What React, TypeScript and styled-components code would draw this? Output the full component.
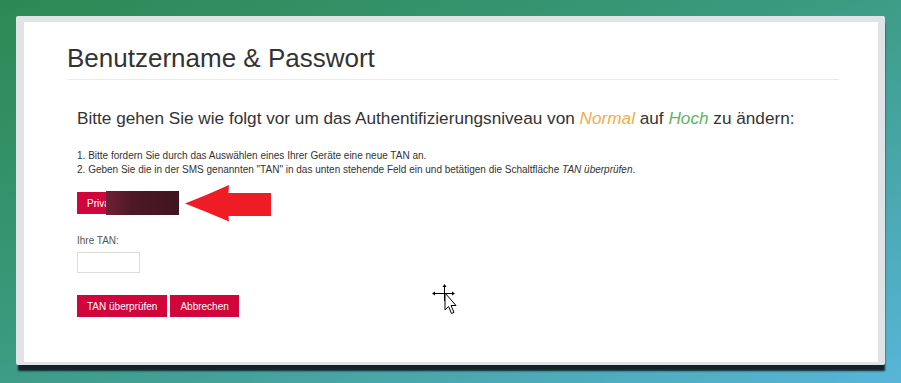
import React from 'react'
import styled, { createGlobalStyle } from 'styled-components'

const GlobalStyle = createGlobalStyle`
    html, body {
        margin: 0;
        padding: 0;
    }
    body {
        font-family: 'Liberation Sans', Arial, sans-serif;
        color: #333;
    }
`

const App: React.FC = () => {
    return (
        <Page>
            <GlobalStyle />
            <Window>
                <Sheet>
                    <Title>Benutzername &amp; Passwort</Title>
                    <Body>
                        <Lead>
                            Bitte gehen Sie wie folgt vor um das Authentifizierungsniveau von{' '}
                            <Level color="#f0ad4e">Normal</Level> auf <Level color="#5cb85c">Hoch</Level> zu ändern:
                        </Lead>
                        <Steps>
                            <li>Bitte fordern Sie durch das Auswählen eines Ihrer Geräte eine neue TAN an.</li>
                            <li>
                                Geben Sie die in der SMS genannten "TAN" in das unten stehende Feld ein und betätigen die
                                Schaltfläche <em>TAN überprüfen</em>.
                            </li>
                        </Steps>
                        <DeviceRow>
                            <DeviceButton>
                                Priva
                                <Redacted />
                            </DeviceButton>
                            <Arrow width="86" height="38" viewBox="0 0 86 38">
                                <path d="M0 19.5 Q22 11 44 1 L43.5 9 L86 9 L86 32 L43.5 32 L44 37.5 Q22 28 0 19.5 Z" fill="#ee1d25" />
                            </Arrow>
                        </DeviceRow>
                        <Label>Ihre TAN:</Label>
                        <TanInput type="text" />
                        <Actions>
                            <RedButton>TAN überprüfen</RedButton>
                            <RedButton>Abbrechen</RedButton>
                        </Actions>
                    </Body>
                    <Cursor width="26" height="34" viewBox="0 0 26 34">
                        <g stroke="#000" strokeWidth="1" fill="none">
                            <path d="M12.5 2 V17" />
                            <path d="M2 9.5 H21" />
                        </g>
                        <path d="M12.5 0 L10.5 3 H14.5 Z M0 9.5 L3 7.5 V11.5 Z M23 9.5 L20 7.5 V11.5 Z" fill="#000" />
                        <path d="M13 9 L13 26 L16.5 22.5 L19.5 29.5 L22 28.4 L19 21.5 L24 21.5 Z" fill="#fff" stroke="#000" strokeWidth="1" strokeLinejoin="round" />
                    </Cursor>
                </Sheet>
            </Window>
        </Page>
    )
}

const Page = styled.div`
    width: 901px;
    height: 383px;
    box-sizing: border-box;
    padding: 16px 0 0 16px;
    overflow: hidden;
    background: linear-gradient(to bottom right, #2d8953 0%, #3a9a7e 45%, #57b5d9 100%);
`

const Window = styled.div`
    width: 869px;
    height: 349px;
    box-sizing: border-box;
    border-style: solid;
    border-color: #e1e4e7;
    border-width: 6px 7px 3px 8px;
    border-radius: 2px;
    background: #fff;
    box-shadow: 1px 7px 2px -1px #13232a;
`

const Sheet = styled.div`
    position: relative;
    height: 100%;
    padding: 0 39px 0 43px;
    background: #fff;
`

const Title = styled.h1`
    margin: 0;
    padding: 22px 0 6px;
    font-size: 26px;
    line-height: 29px;
    font-weight: 400;
    color: #333;
    border-bottom: 1px solid #ebebeb;
`

const Body = styled.div`
    padding-left: 10px;
    display: flex;
    flex-direction: column;
    align-items: flex-start;
`

const Lead = styled.h3`
    margin: 27px 0 0;
    font-size: 17.2px;
    line-height: 22px;
    font-weight: 400;
    color: #333;
    white-space: nowrap;
`

const Level = styled.em<{ color: string }>`
    color: ${p => p.color};
`

const Steps = styled.ol`
    margin: 20px 0 0;
    padding: 0;
    list-style-position: inside;
    font-size: 10px;
    line-height: 14px;
    color: #333;
`

const DeviceRow = styled.div`
    display: flex;
    align-items: center;
    margin-top: 15px;
`

const RedButton = styled.button`
    height: 22px;
    padding: 0 10px;
    border: none;
    border-radius: 0;
    background: #d1053b;
    color: #fff;
    font-family: 'Liberation Sans', Arial, sans-serif;
    font-size: 10px;
    cursor: pointer;
`

const DeviceButton = styled(RedButton)`
    position: relative;
    width: 102px;
    text-align: left;
`

const Redacted = styled.span`
    position: absolute;
    left: 29px;
    top: -1px;
    width: 73px;
    height: 24px;
    background: linear-gradient(to right, #6e2233 0%, #4f1826 35%, #3f1520 100%);
    filter: blur(0.6px);
`

const Arrow = styled.svg`
    margin: -8px 0 -8px 6px;
    display: block;
`

const Label = styled.div`
    margin-top: 20px;
    font-size: 10px;
    line-height: 14px;
    color: #555;
`

const TanInput = styled.input`
    margin-top: 4px;
    width: 63px;
    height: 21px;
    box-sizing: border-box;
    border: 1px solid #dcdcdc;
    padding: 0 4px;
    outline: none;
`

const Actions = styled.div`
    display: flex;
    gap: 3px;
    margin-top: 22px;
`

const Cursor = styled.svg`
    position: absolute;
    left: 408px;
    top: 262px;
`

export default App
